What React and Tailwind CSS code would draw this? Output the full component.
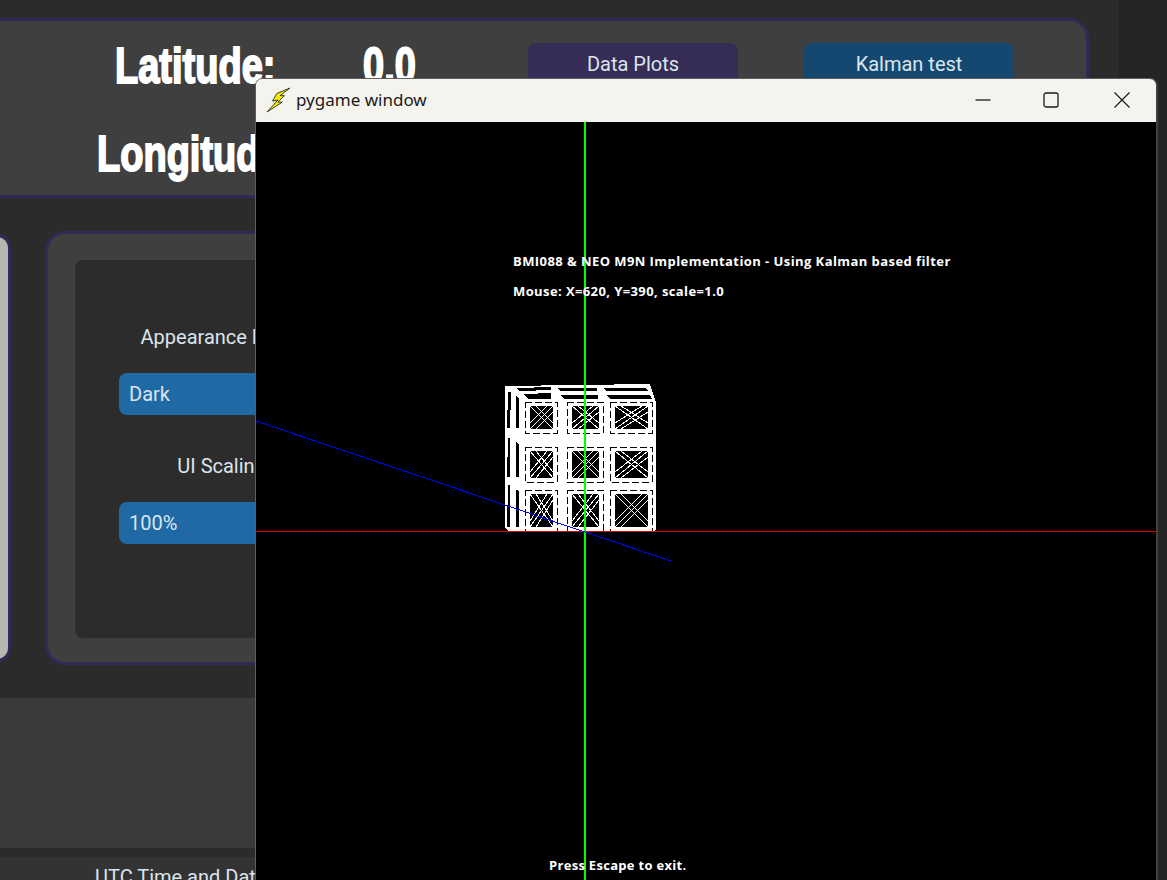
const pyText = "absolute whitespace-nowrap font-['Open_Sans',sans-serif] font-bold text-[13px] leading-none text-white";

// wire cube drawing, coordinates are page pixels shifted into the canvas by the group transform
const xCols = [[530, 553], [572, 599], [615, 648]];
const yRows = [[406, 429], [451, 478], [494, 527]];

const leftSlivers = [
  [[508, 392], [511, 392], [510, 428], [507, 428]],
  [[516, 396], [519, 398], [519, 428], [516, 428]],
  [[508, 438], [510, 438], [510, 477], [507, 477]],
  [[516, 442], [519, 444], [519, 477], [516, 477]],
  [[508, 485], [510, 485], [510, 527], [507, 527]],
  [[516, 490], [519, 491], [519, 527], [516, 527]],
];

const topSlivers = [
  [[516, 388], [551, 387], [551, 390], [520, 391]],
  [[524, 394], [551, 393], [551, 399], [528, 399]],
  [[558, 388], [597, 388], [597, 391], [560, 391]],
  [[560, 395], [598, 395], [598, 399], [564, 399]],
  [[604, 388], [646, 388], [648, 391], [606, 391]],
  [[606, 395], [650, 395], [652, 399], [610, 399]],
];

const toPoints = (poly) => poly.map(([x, y]) => `${x},${y}`).join(" ");

const WireCube = () => (
  <g transform="translate(-256 -122)">
    <polygon points="505,386 650,384 656,402 656,530 650,532 510,532 505,528" fill="#fff" />
    {[...leftSlivers, ...topSlivers].map((poly, index) => (
      <polygon key={index} points={toPoints(poly)} fill="#000" />
    ))}
    {yRows.map(([y1, y2], r) =>
      xCols.map(([x1, x2], c) => (
        <g key={`${r}-${c}`} stroke="#fff" strokeWidth="1">
          {/* broken hairline round each cell */}
          <rect x={x1 - 5} y={y1 - 4} width={x2 - x1 + 9} height={y2 - y1 + 8} fill="none" stroke="#000" strokeDasharray="7 3" />
          <rect x={x1} y={y1} width={x2 - x1} height={y2 - y1} fill="#000" stroke="none" />
          <line x1={x1} y1={y1} x2={x2} y2={y2} />
          <line x1={x1 + 6} y1={y1} x2={x2} y2={y2 - 6} />
          <line x1={x2} y1={y1} x2={x1} y2={y2} />
          <line x1={x2 - 6} y1={y1} x2={x1} y2={y2 - 6} />
          <line x1={x2} y1={y1 + 6} x2={x1 + 6} y2={y2} />
        </g>
      ))
    )}
  </g>
);

const WireScene = () => (
  <svg className="absolute inset-0" width="900" height="758" viewBox="0 0 900 758" shapeRendering="crispEdges">
    <WireCube />
    <line x1="0" y1="409.5" x2="900" y2="409.5" stroke="#e00000" />
    <line x1="329" y1="0" x2="329" y2="758" stroke="#00ff00" strokeWidth="2" />
    <line x1="0" y1="299" x2="415" y2="439" stroke="#0000ff" />
  </svg>
);

const Bolt = () => (
  <svg width="26" height="26" viewBox="0 0 24 24" className="shrink-0">
    <path d="M22 1 L10 6 L6 13 L11 12 L1 23 L15 14 L11 14 L17 8 L13 8 Z" fill="#f5ee00" stroke="#222" strokeWidth="0.8" strokeLinejoin="round" />
  </svg>
);

const PygameWindow = () => (
  <div className="absolute left-[255px] top-[78px] flex h-[802px] w-[903px] flex-col rounded-t-lg border-l border-r-2 border-t border-l-[#5e5e5e] border-r-[#404040] border-t-[#5e5e5e]">
    <div className="flex h-[43px] items-center rounded-t-md bg-[#f4f3ee] pb-[2px] pl-[10px] font-['Noto_Sans',sans-serif] text-[#1a1a1a]">
      <Bolt />
      <span className="ml-[4px] text-[17px]">pygame window</span>
      <div className="ml-auto flex items-center">
        <svg width="16" height="16" viewBox="0 0 16 16" fill="none" stroke="currentColor" strokeWidth="1.3" className="mr-[52px]">
          <path d="M0.5 8h15" />
        </svg>
        <svg width="16" height="16" viewBox="0 0 16 16" fill="none" stroke="currentColor" strokeWidth="1.3" className="mr-[55px]">
          <rect x="1" y="1" width="14" height="14" rx="2" />
        </svg>
        <svg width="16" height="16" viewBox="0 0 16 16" fill="none" stroke="currentColor" strokeWidth="1.2" className="mr-[26px]">
          <path d="M0.5 0.5 15.5 15.5 M15.5 0.5 0.5 15.5" />
        </svg>
      </div>
    </div>
    <div className="relative flex-1 overflow-hidden bg-black">
      <WireScene />
      <span className={`${pyText} left-[257px] top-[133px] tracking-[.43px]`}>BMI088 &amp; NEO M9N Implementation - Using Kalman based filter</span>
      <span className={`${pyText} left-[257px] top-[163px] tracking-[.4px]`}>Mouse: X=620, Y=390, scale=1.0</span>
      <span className={`${pyText} left-[293px] top-[737px] tracking-[.3px]`}>Press Escape to exit.</span>
    </div>
  </div>
);

const Coord = ({ children, className }) => (
  <span className={`absolute origin-left scale-x-[.76] whitespace-nowrap font-['Liberation_Sans',sans-serif] text-[50px] font-bold leading-none text-white [-webkit-text-stroke:2px_white] ${className}`}>
    {children}
  </span>
);

const Dropdown = ({ children }) => (
  <div className="flex h-[42px] w-[206px] items-center rounded-lg bg-[#1f6aa5] px-[10px]">{children}</div>
);

export default function App() {
  return (
    <div className="relative flex h-[880px] w-[1167px] overflow-hidden bg-[#242424] font-['Roboto',sans-serif] text-[20px] text-[#dce4ee]">
      <div className="flex w-[1119px] shrink-0 flex-col bg-[#2b2b2b]">
        {/* top coordinates panel */}
        <div className="relative ml-[-30px] mr-[30px] mt-[18px] flex h-[180px] shrink-0 justify-end gap-[66px] rounded-[20px] border-[3px] border-[#312a56] bg-[#3f3f3f] pr-[72px] pt-[22px]">
          <Coord className="left-[142px] top-[20px]">Latitude:</Coord>
          <Coord className="left-[124px] top-[108px]">Longitude:</Coord>
          <Coord className="left-[390px] top-[20px]">0.0</Coord>
          <div className="flex h-[42px] w-[210px] items-center justify-center rounded-lg bg-[#352d55]">Data Plots</div>
          <div className="flex h-[42px] w-[210px] items-center justify-center rounded-lg bg-[#144870]">Kalman test</div>
        </div>

        {/* middle row */}
        <div className="ml-[-30px] mt-[33px] flex h-[434px] shrink-0 items-center gap-[34px]">
          <div className="h-[428px] w-[41px] rounded-r-[14px] border-[3px] border-l-0 border-[#312a56] bg-[#b9b5b0]" />
          <div className="h-[434px] w-[500px] rounded-[20px] border-[3px] border-[#312a56] bg-[#3f3f3f] pl-[27px] pt-[26px]">
            <div className="flex h-[378px] w-[300px] flex-col rounded-lg bg-[#2c2c2c] pl-[44px] pt-[65px]">
              <div className="w-[210px] text-center leading-[24px]">Appearance Mode:</div>
              <div className="mt-[24px]"><Dropdown>Dark</Dropdown></div>
              <div className="mt-[39px] w-[210px] text-center leading-[24px]">UI Scaling:</div>
              <div className="mt-[24px]"><Dropdown>100%</Dropdown></div>
            </div>
          </div>
        </div>

        {/* lower panels */}
        <div className="mt-[33px] h-[150px] shrink-0 bg-[#3a3a3a]" />
        <div className="mt-[9px] flex-1 bg-[#333333] pl-[95px] pt-[8px] leading-[24px]">UTC Time and Date</div>
      </div>

      <PygameWindow />
    </div>
  );
}
